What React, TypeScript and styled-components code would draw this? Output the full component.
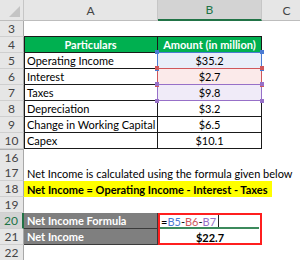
import React from 'react';
import styled, { createGlobalStyle, css } from 'styled-components';

const GlobalStyle = createGlobalStyle`
  html, body {
    margin: 0;
    padding: 0;
    background: #ffffff;
    overflow: hidden;
  }
`;

const tones: Record<string, { line: string; fill: string }> = {
  blue: { line: '#4a7bd3', fill: '#e9eef9' },
  red: { line: '#d0575b', fill: '#fbeaea' },
  purple: { line: '#9770c8', fill: '#f0ebf8' },
};

const Sheet = styled.div`
  width: 300px;
  height: 260px;
  overflow: hidden;
  font-family: Lato, 'Liberation Sans', sans-serif;
  font-size: 11px;
  color: #000;
`;

const Row = styled.div<{ $head?: boolean }>`
  display: grid;
  grid-template-columns: 24px 134px 104px 50px;
  height: ${p => (p.$head ? 21 : 16)}px;
`;

const Corner = styled.div`
  box-sizing: border-box;
  background: #e6e6e6;
  border-right: 1px solid #c6c6c6;
  border-bottom: 1px solid #bdbdbd;
  display: flex;
  align-items: flex-end;
  justify-content: flex-end;
  padding: 0 3px 3px 0;
`;

const ColHead = styled.div<{ $active?: boolean }>`
  box-sizing: border-box;
  display: flex;
  align-items: center;
  justify-content: center;
  background: ${p => (p.$active ? '#d3d3d3' : '#e6e6e6')};
  color: ${p => (p.$active ? '#217346' : '#444')};
  border-right: 1px solid #c6c6c6;
  border-bottom: ${p => (p.$active ? '2px solid #217346' : '1px solid #bdbdbd')};
  font-size: 12px;
`;

const RowHead = styled.div<{ $active?: boolean; $gap?: boolean }>`
  box-sizing: border-box;
  display: flex;
  align-items: center;
  justify-content: center;
  background: ${p => (p.$active ? '#d3d3d3' : '#e6e6e6')};
  color: ${p => (p.$active ? '#217346' : '#444')};
  border-right: ${p => (p.$active ? '2px solid #217346' : '1px solid #a8a8a8')};
  border-bottom: 1px solid #cfcfcf;
  ${p => p.$gap && css`border-top: 1px solid #b0b0b0;`}
  font-size: 12px;
`;

const Cell = styled.div<{
  $bg?: string;
  $align?: 'left' | 'center';
  $bold?: boolean;
  $color?: string;
  $table?: boolean;
  $first?: boolean;
  $topLine?: boolean;
  $span?: boolean;
}>`
  position: relative;
  box-sizing: border-box;
  display: flex;
  align-items: center;
  justify-content: ${p => (p.$align === 'center' ? 'center' : 'flex-start')};
  padding: 0 3px;
  white-space: nowrap;
  overflow: hidden;
  background: ${p => p.$bg || 'transparent'};
  color: ${p => p.$color || '#000'};
  font-weight: ${p => (p.$bold ? 700 : 400)};
  ${p => p.$span && css`grid-column: 2 / -1;`}
  ${p =>
    p.$table &&
    css`
      border-right: 1px solid #1a1a1a;
      border-bottom: 1px solid #1a1a1a;
    `}
  ${p => p.$first && css`box-shadow: inset 1px 0 0 #1a1a1a;`}
  ${p => p.$topLine && css`border-bottom: 1px solid #1a1a1a;`}
`;

const Ranged = styled(Cell)<{ $tone: string }>`
  background: ${p => tones[p.$tone].fill};
  overflow: visible;
  &::after {
    content: '';
    position: absolute;
    left: -1px;
    top: -1px;
    right: -1px;
    bottom: -1px;
    border: 1px solid ${p => tones[p.$tone].line};
    pointer-events: none;
  }
`;

const Handle = styled.span<{ $tone: string; $x: 'l' | 'r'; $y: 't' | 'b' }>`
  position: absolute;
  z-index: 2;
  width: 4px;
  height: 4px;
  background: ${p => tones[p.$tone].line};
  ${p => (p.$x === 'l' ? 'left: -3px;' : 'right: -3px;')}
  ${p => (p.$y === 't' ? 'top: -3px;' : 'bottom: -3px;')}
`;

const GreenHead = styled(Cell)`
  background: #00b050;
  color: #ffffff;
  font-weight: 700;
  justify-content: center;
`;

const GrayLabel = styled(Cell)`
  background: #7f7f7f;
  color: #ffffff;
  font-weight: 700;
  border-bottom: 1px solid #3a3a3a;
  border-right: 1px solid #3a3a3a;
`;

const Highlight = styled.span`
  background: #ffff00;
  font-weight: 700;
  padding: 0 4px 0 3px;
  margin-left: -3px;
  height: 100%;
  display: flex;
  align-items: center;
`;

const FormulaCell = styled(Cell)`
  box-shadow: inset 2px 0 0 #ff1f1f, inset -2px 0 0 #ff1f1f, inset 0 2px 0 #ff1f1f;
  &::after {
    content: '';
    position: absolute;
    left: 2px;
    right: 3px;
    bottom: 0;
    height: 2px;
    background: #3c8a5c;
  }
`;

const ResultCell = styled(Cell)`
  box-shadow: inset 2px 0 0 #ff1f1f, inset -2px 0 0 #ff1f1f, inset 0 -2px 0 #ff1f1f;
`;

const Ref = styled.span<{ $tone?: string }>`
  color: ${p => (p.$tone ? tones[p.$tone].line : '#000')};
`;

const Caret = styled.span`
  display: inline-block;
  width: 1px;
  height: 12px;
  margin-left: 2px;
  background: #222;
`;

const tableRows = [
  { n: 5, label: 'Operating Income', value: '$35.2', tone: 'blue' },
  { n: 6, label: 'Interest', value: '$2.7', tone: 'red' },
  { n: 7, label: 'Taxes', value: '$9.8', tone: 'purple' },
  { n: 8, label: 'Depreciation', value: '$3.2' },
  { n: 9, label: 'Change in Working Capital', value: '$6.5' },
  { n: 10, label: 'Capex', value: '$10.1' },
];

const Empty = ({ n, gap }: { n: number; gap?: boolean }) => (
  <Row>
    <RowHead $gap={gap}>{n}</RowHead>
    <Cell />
    <Cell />
    <Cell />
  </Row>
);

const App = () => (
  <Sheet>
    <GlobalStyle />
    <Row $head>
      <Corner>
        <svg width="11" height="11" viewBox="0 0 11 11">
          <polygon points="11,0 11,11 0,11" fill="#c4c4c4" />
        </svg>
      </Corner>
      <ColHead>A</ColHead>
      <ColHead $active>B</ColHead>
      <ColHead>C</ColHead>
    </Row>
    <Row>
      <RowHead>3</RowHead>
      <Cell $topLine />
      <Cell $topLine />
      <Cell />
    </Row>
    <Row>
      <RowHead>4</RowHead>
      <GreenHead $table $first>Particulars</GreenHead>
      <GreenHead $table>Amount (in million)</GreenHead>
      <Cell />
    </Row>
    {tableRows.map(r => (
      <Row key={r.n}>
        <RowHead>{r.n}</RowHead>
        <Cell $table $first>{r.label}</Cell>
        {r.tone ? (
          <Ranged $table $align="center" $tone={r.tone}>
            {r.value}
            <Handle $tone={r.tone} $x="l" $y="t" />
            <Handle $tone={r.tone} $x="r" $y="t" />
            <Handle $tone={r.tone} $x="l" $y="b" />
            <Handle $tone={r.tone} $x="r" $y="b" />
          </Ranged>
        ) : (
          <Cell $table $align="center">{r.value}</Cell>
        )}
        <Cell />
      </Row>
    ))}
    <Empty n={16} gap />
    <Row>
      <RowHead>17</RowHead>
      <Cell $span>Net Income is calculated using the formula given below</Cell>
    </Row>
    <Row>
      <RowHead>18</RowHead>
      <Cell $span>
        <Highlight>Net Income = Operating Income - Interest - Taxes</Highlight>
      </Cell>
    </Row>
    <Empty n={19} />
    <Row>
      <RowHead $active>20</RowHead>
      <GrayLabel>Net Income Formula</GrayLabel>
      <FormulaCell>
        <Ref>=</Ref>
        <Ref $tone="blue">B5</Ref>
        <Ref>-</Ref>
        <Ref $tone="red">B6</Ref>
        <Ref>-</Ref>
        <Ref $tone="purple">B7</Ref>
        <Caret />
      </FormulaCell>
      <Cell />
    </Row>
    <Row>
      <RowHead>21</RowHead>
      <GrayLabel>Net Income</GrayLabel>
      <ResultCell $align="center" $bold>$22.7</ResultCell>
      <Cell />
    </Row>
    <Empty n={22} />
  </Sheet>
);

export default App;
